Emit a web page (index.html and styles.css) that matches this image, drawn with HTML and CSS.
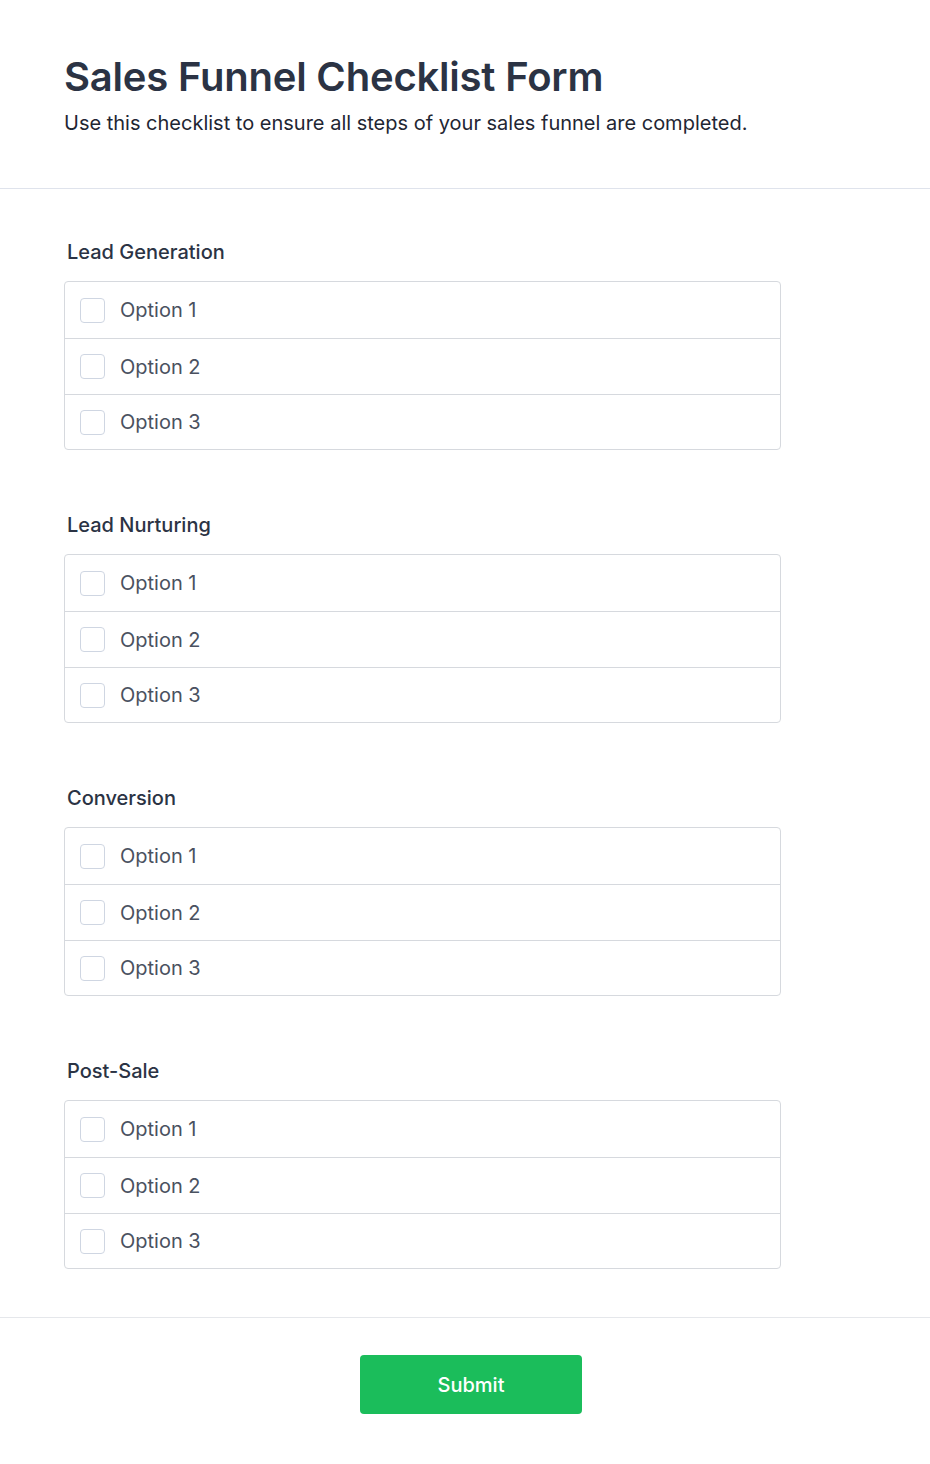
FILE: index.html
```html
<!DOCTYPE html>
<html lang="en">
<head>
<meta charset="utf-8">
<title>Sales Funnel Checklist Form</title>
<link rel="stylesheet" href="styles.css">
</head>
<body>
<form class="form">
  <header class="form-header">
    <h1 class="title">Sales Funnel Checklist Form</h1>
    <p class="subtitle">Use this checklist to ensure all steps of your sales funnel are completed.</p>
  </header>

  <div class="form-body">
    <fieldset class="group">
      <legend class="group-label">Lead Generation</legend>
      <div class="options">
        <label class="option"><input type="checkbox" class="check"><span>Option 1</span></label>
        <label class="option"><input type="checkbox" class="check"><span>Option 2</span></label>
        <label class="option"><input type="checkbox" class="check"><span>Option 3</span></label>
      </div>
    </fieldset>

    <fieldset class="group">
      <legend class="group-label">Lead Nurturing</legend>
      <div class="options">
        <label class="option"><input type="checkbox" class="check"><span>Option 1</span></label>
        <label class="option"><input type="checkbox" class="check"><span>Option 2</span></label>
        <label class="option"><input type="checkbox" class="check"><span>Option 3</span></label>
      </div>
    </fieldset>

    <fieldset class="group">
      <legend class="group-label">Conversion</legend>
      <div class="options">
        <label class="option"><input type="checkbox" class="check"><span>Option 1</span></label>
        <label class="option"><input type="checkbox" class="check"><span>Option 2</span></label>
        <label class="option"><input type="checkbox" class="check"><span>Option 3</span></label>
      </div>
    </fieldset>

    <fieldset class="group">
      <legend class="group-label">Post-Sale</legend>
      <div class="options">
        <label class="option"><input type="checkbox" class="check"><span>Option 1</span></label>
        <label class="option"><input type="checkbox" class="check"><span>Option 2</span></label>
        <label class="option"><input type="checkbox" class="check"><span>Option 3</span></label>
      </div>
    </fieldset>
  </div>

  <footer class="form-footer">
    <button type="button" class="submit">Submit</button>
  </footer>
</form>
</body>
</html>
```

FILE: styles.css
```css
* {
  box-sizing: border-box;
}

html, body {
  margin: 0;
  padding: 0;
  background: #ffffff;
}

body {
  font-family: Inter, "Noto Sans", sans-serif;
  color: #2d3748;
}

.form {
  width: 930px;
}

.form-header {
  padding: 53px 64px 51px;
  border-bottom: 1px solid #dfe3ec;
}

.title {
  margin: 0;
  font-size: 40px;
  line-height: 48px;
  font-weight: 600;
  color: #2b3344;
  letter-spacing: -0.2px;
}

.subtitle {
  margin: 8px 0 0;
  font-size: 20px;
  line-height: 28px;
  color: #1f2633;
}

.form-body {
  padding: 49px 149px 48px 64px;
  display: flex;
  flex-direction: column;
  gap: 61px;
}

.group {
  margin: 0;
  padding: 0;
  border: 0;
  min-width: 0;
  display: flex;
  flex-direction: column;
  gap: 15px;
}

.group-label {
  float: left;
  padding: 0 0 0 3px;
  font-size: 20px;
  line-height: 28px;
  font-weight: 500;
  color: #2b3344;
}

.options {
  clear: both;
  border: 1px solid #d6d9de;
  border-radius: 4px;
  display: flex;
  flex-direction: column;
}

.option {
  height: 56px;
  display: flex;
  align-items: center;
  gap: 15px;
  padding: 0 0 0 15px;
  font-size: 20px;
  color: #4a5160;
  border-top: 1px solid #d6d9de;
}

.option:first-child {
  border-top: 0;
  height: 56px;
}

.option:last-child {
  height: 55px;
}

.check {
  appearance: none;
  -webkit-appearance: none;
  margin: 0;
  width: 25px;
  height: 25px;
  border: 1px solid #cfd6e2;
  border-radius: 4px;
  background: #ffffff;
  flex: none;
}

.form-footer {
  border-top: 1px solid #e5e7eb;
  padding: 37px 0 50px 360px;
  display: flex;
}

.submit {
  width: 222px;
  height: 59px;
  border: 0;
  border-radius: 4px;
  background: #1bbd5b;
  color: #ffffff;
  font-family: Inter, "Noto Sans", sans-serif;
  font-size: 20px;
  font-weight: 500;
}
```
